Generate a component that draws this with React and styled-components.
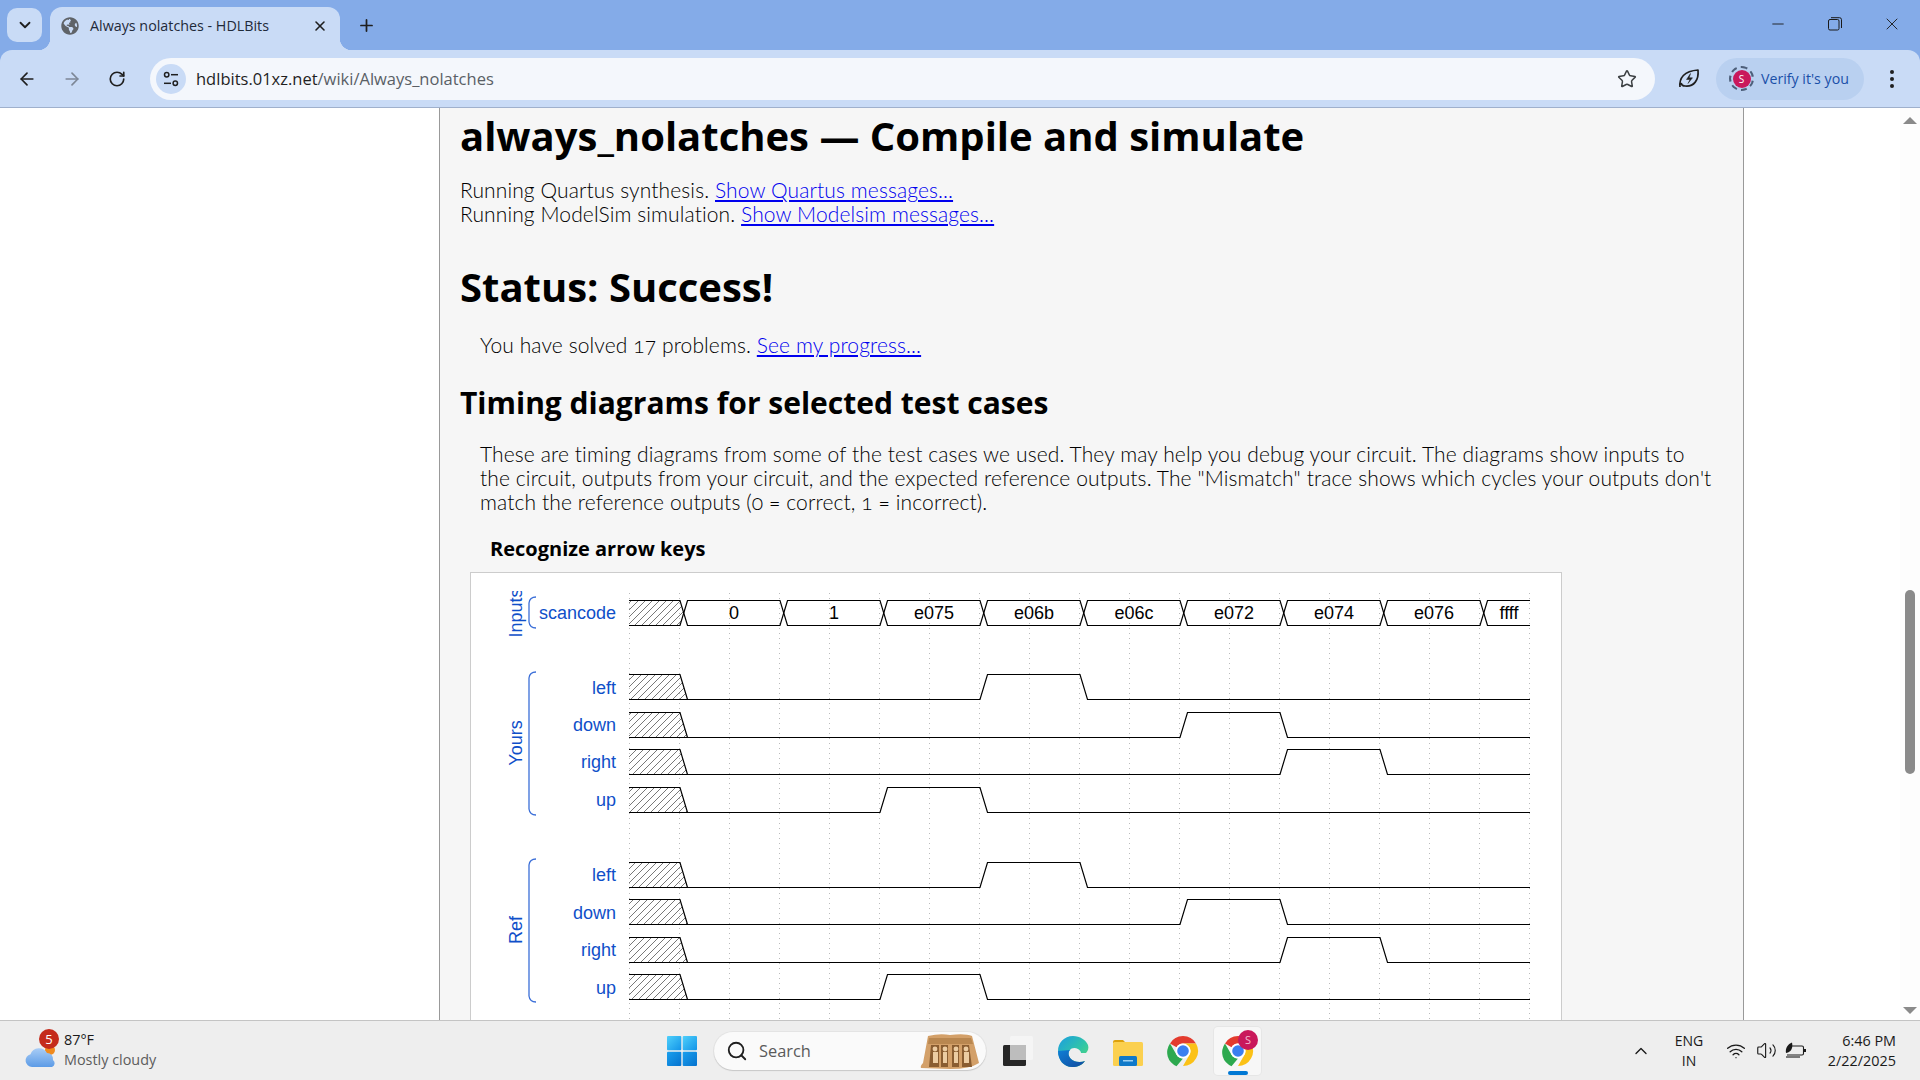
import styled, { createGlobalStyle } from "styled-components";
import { ArrowLeft, ArrowRight, RotateCw, Star, ChevronDown, ChevronUp, Plus, X, Minus, Search, Wifi, Volume2 } from "lucide-react";
import { FaGlobeAmericas } from "react-icons/fa";

const GlobalStyle = createGlobalStyle`
  html, body {
    margin: 0;
    padding: 0;
    height: 100%;
    overflow: hidden;
    background: #fff;
  }
  * { box-sizing: border-box; }
`;

const uiFont = `"Open Sans", "Noto Sans", "Liberation Sans", sans-serif`;

/* ---------- timing diagram ---------- */

const dataValues = ["0", "1", "e075", "e06b", "e06c", "e072", "e074", "e076", "ffff"];

const yoursRows = [
  { name: "left", top: 674.5, labelY: 693.5, rise: 980, fall: 1080 },
  { name: "down", top: 712.5, labelY: 730.5, rise: 1180, fall: 1280 },
  { name: "right", top: 749.5, labelY: 767.5, rise: 1280, fall: 1380 },
  { name: "up", top: 787.5, labelY: 805.5, rise: 880, fall: 980 },
];

const refRows = [
  { name: "left", top: 862.5, labelY: 880.5, rise: 980, fall: 1080 },
  { name: "down", top: 899.5, labelY: 918.5, rise: 1180, fall: 1280 },
  { name: "right", top: 937.5, labelY: 955.5, rise: 1280, fall: 1380 },
  { name: "up", top: 974.5, labelY: 993.5, rise: 880, fall: 980 },
];

const WAVE_H = 25;
const WAVE_START = 629;
const WAVE_END = 1530;
const gridX = Array.from({ length: 19 }, (_, i) => WAVE_START + i * 50);

const Bracket = ({ y0, y1 }) => (
  <path
    d={`M536,${y0} c-4,0 -6.5,2 -7,6 L529,${y1 - 6} c0.5,4 3,6 7,6`}
    fill="none"
    stroke="#3b6fd8"
    strokeWidth="1.3"
  />
);

const GroupLabel = ({ y, children }) => (
  <text x="522" y={y} transform={`rotate(-90 522 ${y})`} textAnchor="middle" fontSize="18" fill="#0f4fc9">
    {children}
  </text>
);

const BitRow = ({ row }) => {
  const { name, top, labelY, rise, fall } = row;
  const bot = top + WAVE_H;
  return (
    <g>
      <text x="616" y={labelY} textAnchor="end" fontSize="18" fill="#0f4fc9">{name}</text>
      <path
        d={`M${WAVE_START},${top} L680,${top} L687.5,${bot} L${WAVE_START},${bot} Z`}
        fill="url(#hatch)"
        stroke="none"
      />
      <path d={`M${WAVE_START},${top} L680,${top} L687.5,${bot}`} fill="none" stroke="#000" strokeWidth="1.2" />
      <path
        d={`M${WAVE_START},${bot} L${rise},${bot} L${rise + 7.5},${top} L${fall},${top} L${fall + 7.5},${bot} L${WAVE_END},${bot}`}
        fill="none"
        stroke="#000"
        strokeWidth="1.2"
      />
    </g>
  );
};

const TimingDiagram = () => {
  const top = 600.5;
  const bot = top + WAVE_H;
  const mid = top + WAVE_H / 2;
  return (
    <DiagramSvg viewBox="471 573 1090 460" width="1090" height="460">
      <defs>
        <pattern id="hatch" patternUnits="userSpaceOnUse" width="7" height="7">
          <path d="M-1,1 L1,-1 M0,7 L7,0 M6,8 L8,6" stroke="#555" strokeWidth="0.8" />
        </pattern>
        <clipPath id="inputsClip">
          <rect x="500" y="591" width="40" height="60" />
        </clipPath>
      </defs>

      {gridX.map((x) => (
        <line key={x} x1={x + 0.5} y1="593" x2={x + 0.5} y2="1033" stroke="#bbb" strokeDasharray="1 4" />
      ))}

      <g clipPath="url(#inputsClip)">
        <GroupLabel y={613}>Inputs</GroupLabel>
      </g>
      <GroupLabel y={743}>Yours</GroupLabel>
      <GroupLabel y={930}>Ref</GroupLabel>
      <Bracket y0={597} y1={628} />
      <Bracket y0={672} y1={815} />
      <Bracket y0={859} y1={1002} />

      <text x="616" y="619" textAnchor="end" fontSize="18" fill="#0f4fc9">scancode</text>
      <path
        d={`M${WAVE_START},${top} L680,${top} L683.75,${mid} L680,${bot} L${WAVE_START},${bot} Z`}
        fill="url(#hatch)"
      />
      <path d={`M${WAVE_START},${top} L680,${top} L683.75,${mid} L680,${bot} L${WAVE_START},${bot}`} fill="none" stroke="#000" strokeWidth="1.2" />
      {dataValues.map((v, i) => {
        const s = 680 + i * 100;
        const last = i === dataValues.length - 1;
        const d = last
          ? `M${WAVE_END},${top} L${s + 7.5},${top} L${s + 3.75},${mid} L${s + 7.5},${bot} L${WAVE_END},${bot}`
          : `M${s + 3.75},${mid} L${s + 7.5},${top} L${s + 100},${top} L${s + 103.75},${mid} L${s + 100},${bot} L${s + 7.5},${bot} Z`;
        return (
          <g key={v}>
            <path d={d} fill="none" stroke="#000" strokeWidth="1.2" />
            <text x={last ? 1509 : s + 54} y="619" textAnchor="middle" fontSize="18" fill="#000">{v}</text>
          </g>
        );
      })}

      {yoursRows.map((r) => <BitRow key={r.name} row={r} />)}
      {refRows.map((r) => <BitRow key={r.name} row={r} />)}
    </DiagramSvg>
  );
};

/* ---------- logos ---------- */

const ChromeLogo = ({ size = 32 }) => (
  <svg width={size} height={size} viewBox="0 0 32 32">
    <path d="M16 1a15 15 0 0 1 13 7.5H16a7.5 7.5 0 0 0-6.5 3.75L3 8.5A15 15 0 0 1 16 1z" fill="#e33b2e" />
    <path d="M3 8.5l6.5 11.25A7.5 7.5 0 0 0 16 23.5l-6.5 7.7A15 15 0 0 1 3 8.5z" fill="#2da94f" />
    <path d="M29 8.5A15 15 0 0 1 16 31l6.5-11.25A7.5 7.5 0 0 0 22.5 12.25L16 8.5z" fill="#fbc116" />
    <circle cx="16" cy="16" r="7.5" fill="#fff" />
    <circle cx="16" cy="16" r="5.8" fill="#3b7ff0" />
  </svg>
);

const EdgeLogo = () => (
  <svg width="32" height="36" viewBox="0 0 32 36">
    <defs>
      <linearGradient id="edgeTop" x1="0" y1="0" x2="1" y2="1">
        <stop offset="0" stopColor="#1b9de2" />
        <stop offset="0.55" stopColor="#30c5a8" />
        <stop offset="1" stopColor="#5fdc6c" />
      </linearGradient>
      <linearGradient id="edgeLow" x1="0" y1="0" x2="1" y2="1">
        <stop offset="0" stopColor="#0f7fd6" />
        <stop offset="1" stopColor="#114a9e" />
      </linearGradient>
    </defs>
    <path d="M16 3C7 3 1 10 1 18c0 9 6 16 14 16 6 0 10-2 13-6-5 2-11 1-14-2-3-3-3-7-1-9 1-2 5-3 8-1 2 1 3 3 3 4h5c2-2 3-5 2-8C29 7 23 3 16 3z" fill="url(#edgeTop)" />
    <path d="M1 18c0 9 6 16 14 16 6 0 10-2 13-6-5 2-11 1-14-2-3-3-3-7-1-9-4 0-8 1-12 1z" fill="url(#edgeLow)" />
  </svg>
);

const FolderLogo = () => (
  <svg width="30" height="30" viewBox="0 0 30 30">
    <path d="M0 6a2 2 0 0 1 2-2h8l3 3h-13z" fill="#dda10c" />
    <rect x="0" y="6" width="30" height="24" rx="1.5" fill="#fbd04f" />
    <rect x="6" y="20" width="18" height="10" rx="1.5" fill="#0f79c9" />
    <rect x="10" y="24" width="10" height="1.5" fill="#9bd0f2" />
  </svg>
);

const WindowsLogo = () => (
  <svg width="30" height="30" viewBox="0 0 30 30">
    <defs>
      <linearGradient id="winA" x1="0" y1="0" x2="1" y2="1">
        <stop offset="0" stopColor="#4fd0fb" />
        <stop offset="1" stopColor="#1294e8" />
      </linearGradient>
      <linearGradient id="winB" x1="0" y1="0" x2="1" y2="1">
        <stop offset="0" stopColor="#1aa0ee" />
        <stop offset="1" stopColor="#0572ce" />
      </linearGradient>
    </defs>
    <rect x="0" y="0" width="14.3" height="14.3" rx="1" fill="url(#winA)" />
    <rect x="15.7" y="0" width="14.3" height="14.3" rx="1" fill="url(#winA)" />
    <rect x="0" y="15.7" width="14.3" height="14.3" rx="1" fill="url(#winB)" />
    <rect x="15.7" y="15.7" width="14.3" height="14.3" rx="1" fill="url(#winB)" />
  </svg>
);

const TaskViewLogo = () => (
  <svg width="30" height="30" viewBox="0 0 30 30">
    <rect x="0" y="9" width="23" height="21" rx="1.5" fill="#262626" />
    <rect x="7" y="0" width="23" height="24" rx="1.5" fill="#f6f6f6" fillOpacity="0.85" />
    <rect x="7" y="9" width="16" height="15" fill="#bdbdbd" />
  </svg>
);

const TempleArt = () => (
  <svg width="60" height="36" viewBox="0 0 60 36">
    <path d="M8 3 Q20 0 30 2 Q45 0 52 3 L59 30 Q50 36 30 36 L1 35 Q0 33 3 30 Z" fill="#d3a069" />
    <path d="M9 5 L51 5 L53 11 L8 11 Z" fill="#b98750" />
    <g fill="#8a5d31">
      <path d="M11 12h8v22h-10z" />
      <path d="M21 12h7v22h-7z" />
      <path d="M32 12h7v22h-7z" />
      <path d="M42 12h7l3 22h-10z" />
    </g>
    <g fill="#eccca2">
      <circle cx="15" cy="16" r="2.4" />
      <circle cx="25" cy="16" r="2.4" />
      <circle cx="36" cy="16" r="2.4" />
      <circle cx="46" cy="16" r="2.4" />
      <rect x="13" y="19" width="5" height="11" />
      <rect x="23" y="19" width="4" height="11" />
      <rect x="34" y="19" width="4" height="11" />
      <rect x="44" y="19" width="5" height="11" />
    </g>
  </svg>
);

const CloudLogo = () => (
  <svg width="34" height="26" viewBox="0 0 34 26">
    <defs>
      <linearGradient id="cloudFill" x1="0" y1="0" x2="0" y2="1">
        <stop offset="0" stopColor="#a9cdf6" />
        <stop offset="1" stopColor="#5c9be6" />
      </linearGradient>
    </defs>
    <circle cx="26" cy="7" r="5" fill="#f08a1d" />
    <path d="M8 24a6.5 6.5 0 0 1-1.5-12.8A9 9 0 0 1 23 10a6 6 0 0 1 6 7 4 4 0 0 1-1 7z" fill="url(#cloudFill)" />
  </svg>
);

const TuneIcon = () => (
  <svg width="16" height="16" viewBox="0 0 16 16" fill="none" stroke="#1f1f1f" strokeWidth="1.5">
    <circle cx="3.7" cy="3.7" r="2.2" />
    <path d="M8 3.7h7" />
    <circle cx="12.3" cy="12.3" r="2.2" />
    <path d="M1 12.3h7" />
  </svg>
);

const LeafIcon = () => (
  <svg width="22" height="22" viewBox="0 0 22 22" fill="none" stroke="#1f1f1f" strokeWidth="1.7">
    <path d="M2 19 C1 10 6 3 20 2 C21 12 16 19 7 18 C5 18 3.5 17 3 15" strokeLinejoin="round" />
    <path d="M12.5 5.5 L8.5 11.5 H12 L10 15.5 L14.5 9.8 H11.2 Z" fill="#1f1f1f" strokeWidth="0.5" />
  </svg>
);

const RestoreIcon = () => (
  <svg width="14" height="14" viewBox="0 0 14 14" fill="none" stroke="#1a1a1a" strokeWidth="1">
    <rect x="0.5" y="2.5" width="10.5" height="10.5" rx="1.5" />
    <path d="M3 0.7h8.5a2 2 0 0 1 2 2V11" />
  </svg>
);

const BatteryIcon = () => (
  <svg width="22" height="18" viewBox="0 0 22 18" fill="none" stroke="#1a1a1a" strokeWidth="1.1">
    <path d="M6 4h11a1.5 1.5 0 0 1 1.5 1.5v6A1.5 1.5 0 0 1 17 13H2" />
    <rect x="19" y="7" width="2" height="3" fill="#1a1a1a" stroke="none" />
    <path d="M1 11 C0 6 3 2 7 0.5 C8 5 7 10 1 11Z" fill="#1a1a1a" stroke="none" />
    <path d="M1 15h14" />
  </svg>
);

/* ---------- app ---------- */

const App = () => (
  <Screen>
    <GlobalStyle />

    <Frame>
      <TabStrip>
        <TabMenu><ChevronDown size={18} strokeWidth={2.4} color="#1f1f1f" /></TabMenu>
        <Tab>
          <FaGlobeAmericas size={18} color="#5f6368" />
          <TabTitle>Always nolatches - HDLBits</TabTitle>
          <X size={16} strokeWidth={2.4} color="#1f1f1f" />
        </Tab>
        <NewTab><Plus size={19} strokeWidth={2.2} color="#1f1f1f" /></NewTab>
        <WindowButtons>
          <WindowButton><Minus size={18} strokeWidth={1.2} color="#1a1a1a" /></WindowButton>
          <WindowButton><RestoreIcon /></WindowButton>
          <WindowButton><X size={20} strokeWidth={1.1} color="#1a1a1a" /></WindowButton>
        </WindowButtons>
      </TabStrip>

      <Toolbar>
        <NavButton><ArrowLeft size={20} strokeWidth={2} color="#1f1f1f" /></NavButton>
        <NavButton><ArrowRight size={20} strokeWidth={2} color="#7d8796" /></NavButton>
        <NavButton><RotateCw size={18} strokeWidth={2.2} color="#1f1f1f" /></NavButton>
        <Omnibox>
          <SiteChip><TuneIcon /></SiteChip>
          <UrlText>hdlbits.01xz.net<UrlPath>/wiki/Always_nolatches</UrlPath></UrlText>
          <Star size={20} strokeWidth={1.8} color="#3c4043" />
        </Omnibox>
        <LeafSlot><LeafIcon /></LeafSlot>
        <VerifyPill>
          <AvatarRing><Avatar>S</Avatar></AvatarRing>
          Verify it's you
        </VerifyPill>
        <MenuDots><i /><i /><i /></MenuDots>
      </Toolbar>
    </Frame>

    <Viewport>
      <Gutter />
      <Article>
        <Title>always_nolatches — Compile and simulate</Title>
        <LogBlock>
          Running Quartus synthesis. <a href="#q">Show Quartus messages...</a>
          <br />
          Running ModelSim simulation. <a href="#m">Show Modelsim messages...</a>
        </LogBlock>
        <StatusTitle>Status: Success!</StatusTitle>
        <Solved>You have solved 17 problems. <a href="#p">See my progress...</a></Solved>
        <SubTitle>Timing diagrams for selected test cases</SubTitle>
        <Explain>
          These are timing diagrams from some of the test cases we used. They may help you debug your circuit. The diagrams show inputs to
          <br />
          the circuit, outputs from your circuit, and the expected reference outputs. The "Mismatch" trace shows which cycles your outputs don't
          <br />
          match the reference outputs (0 = correct, 1 = incorrect).
        </Explain>
        <CaseTitle>Recognize arrow keys</CaseTitle>
        <DiagramCard><TimingDiagram /></DiagramCard>
      </Article>
      <RightGutter>
        <Scrollbar>
          <ArrowUp />
          <Thumb />
          <ArrowDown />
        </Scrollbar>
      </RightGutter>
    </Viewport>

    <Taskbar>
      <Weather>
        <WeatherIcon>
          <CloudLogo />
          <Badge>5</Badge>
        </WeatherIcon>
        <WeatherText>
          <span>87°F</span>
          <WeatherNote>Mostly cloudy</WeatherNote>
        </WeatherText>
      </Weather>
      <TaskCluster>
        <StartSlot><WindowsLogo /></StartSlot>
        <SearchBox>
          <Search size={22} strokeWidth={2} color="#1f1f1f" />
          <SearchLabel>Search</SearchLabel>
          <TempleArt />
        </SearchBox>
        <TaskSlot><TaskViewLogo /></TaskSlot>
        <TaskSlot><EdgeLogo /></TaskSlot>
        <TaskSlot><FolderLogo /></TaskSlot>
        <TaskSlot><ChromeLogo /></TaskSlot>
        <TaskSlot $active>
          <ChromeLogo />
          <ProfileDot>S</ProfileDot>
          <ActiveBar />
        </TaskSlot>
      </TaskCluster>
      <Tray>
        <TraySlot $w={24}><ChevronUp size={20} strokeWidth={1.6} color="#1a1a1a" /></TraySlot>
        <Lang>ENG<br />IN</Lang>
        <TraySlot $w={30}><Wifi size={20} strokeWidth={1.6} color="#1a1a1a" /></TraySlot>
        <TraySlot $w={30}><Volume2 size={21} strokeWidth={1.3} color="#1a1a1a" /></TraySlot>
        <TraySlot $w={30}><BatteryIcon /></TraySlot>
        <Clock>6:46 PM<br />2/22/2025</Clock>
      </Tray>
    </Taskbar>
  </Screen>
);

export default App;

const Screen = styled.div`
  width: 1920px;
  height: 1080px;
  display: flex;
  flex-direction: column;
  overflow: hidden;
  font-family: ${uiFont};
`;

const Frame = styled.header`
  flex: none;
  background: #84abe8;
`;

const TabStrip = styled.div`
  height: 50px;
  display: flex;
  align-items: flex-end;
  padding-left: 7px;
`;

const TabMenu = styled.div`
  width: 35px;
  height: 34px;
  margin-bottom: 8px;
  border-radius: 10px;
  background: #c9dbf6;
  display: flex;
  align-items: center;
  justify-content: center;
`;

const Tab = styled.div`
  position: relative;
  width: 290px;
  height: 43px;
  margin-left: 8px;
  padding: 0 12px 6px 11px;
  background: #c9dbf6;
  border-radius: 12px 12px 0 0;
  display: flex;
  align-items: center;
  gap: 11px;

  &::before,
  &::after {
    content: "";
    position: absolute;
    bottom: 0;
    width: 12px;
    height: 12px;
  }
  &::before {
    left: -12px;
    background: radial-gradient(circle at 0 0, transparent 12px, #c9dbf6 12.5px);
  }
  &::after {
    right: -12px;
    background: radial-gradient(circle at 100% 0, transparent 12px, #c9dbf6 12.5px);
  }
`;

const TabTitle = styled.span`
  flex: 1;
  font-size: 14.3px;
  color: #1f2a3a;
  white-space: nowrap;
`;

const NewTab = styled.div`
  width: 34px;
  height: 34px;
  margin: 0 0 8px 9px;
  display: flex;
  align-items: center;
  justify-content: center;
`;

const WindowButtons = styled.div`
  margin-left: auto;
  height: 50px;
  display: flex;
`;

const WindowButton = styled.div`
  width: 57px;
  height: 50px;
  padding-bottom: 2px;
  display: flex;
  align-items: center;
  justify-content: center;
`;

const Toolbar = styled.div`
  height: 58px;
  padding: 0 8px 0 9px;
  background: #c9dbf6;
  border-radius: 12px 12px 0 0;
  border-bottom: 1px solid #9fb0cc;
  display: flex;
  align-items: center;
`;

const NavButton = styled.div`
  width: 36px;
  height: 36px;
  margin-right: 9px;
  display: flex;
  align-items: center;
  justify-content: center;
`;

const Omnibox = styled.div`
  width: 1505px;
  height: 42px;
  margin-left: 6px;
  padding: 0 18px 0 6px;
  border-radius: 21px;
  background: #f4f7fc;
  display: flex;
  align-items: center;
`;

const SiteChip = styled.div`
  width: 30px;
  height: 30px;
  border-radius: 50%;
  background: #c9dbf6;
  display: flex;
  align-items: center;
  justify-content: center;
`;

const UrlText = styled.div`
  flex: 1;
  margin-left: 10px;
  font-size: 16.5px;
  color: #1f1f1f;
`;

const UrlPath = styled.span`
  color: #5a5f66;
`;

const LeafSlot = styled.div`
  width: 36px;
  height: 36px;
  margin: 0 9px 0 16px;
  display: flex;
  align-items: center;
  justify-content: center;
`;

const VerifyPill = styled.div`
  width: 148px;
  height: 42px;
  padding-left: 13px;
  border-radius: 21px;
  background: #b9d0f0;
  color: #1a4fa8;
  font-size: 14.2px;
  display: flex;
  align-items: center;
  gap: 7px;
  white-space: nowrap;
`;

const AvatarRing = styled.div`
  width: 25px;
  height: 25px;
  border-radius: 50%;
  border: 2px dashed #4d5f7a;
  display: flex;
  align-items: center;
  justify-content: center;
`;

const Avatar = styled.div`
  width: 18px;
  height: 18px;
  border-radius: 50%;
  background: #c9185b;
  color: #fff;
  font-size: 10px;
  display: flex;
  align-items: center;
  justify-content: center;
`;

const MenuDots = styled.div`
  margin-left: 26px;
  display: flex;
  flex-direction: column;
  gap: 3px;

  i {
    display: block;
    width: 4px;
    height: 4px;
    border-radius: 50%;
    background: #1f1f1f;
  }
`;

const Viewport = styled.main`
  flex: 1;
  min-height: 0;
  display: flex;
  overflow: hidden;
  background: #fff;
`;

const Gutter = styled.div`
  width: 439px;
  flex: none;
`;

const Article = styled.article`
  width: 1305px;
  flex: none;
  padding: 2px 0 0 20px;
  background: #f6f6f6;
  border-left: 1px solid #999;
  border-right: 1px solid #999;
  color: #000;
  font-family: Lato, "Liberation Sans", sans-serif;
  font-size: 21px;
  font-weight: 300;
  letter-spacing: 0.11px;
  line-height: 24px;
  font-variant-numeric: oldstyle-nums;

  a {
    color: #0000ee;
  }
`;

const Title = styled.h1`
  margin: 0;
  font-family: ${uiFont};
  font-size: 40px;
  line-height: 52px;
  font-weight: 700;
  letter-spacing: 0;
`;

const LogBlock = styled.p`
  margin: 16px 0 0;
`;

const StatusTitle = styled(Title)`
  margin-top: 35px;
`;

const Solved = styled.p`
  margin: 20px 0 0 20px;
`;

const SubTitle = styled.h2`
  margin: 28px 0 0;
  font-family: ${uiFont};
  font-size: 30px;
  line-height: 36px;
  font-weight: 700;
  letter-spacing: 0;
`;

const Explain = styled.p`
  margin: 21px 0 0 20px;
`;

const CaseTitle = styled.h3`
  margin: 21px 0 0 30px;
  font-family: ${uiFont};
  font-size: 20px;
  line-height: 28px;
  font-weight: 700;
  letter-spacing: 0;
`;

const DiagramCard = styled.div`
  width: 1092px;
  margin: 9px 0 0 10px;
  background: #fff;
  border: 1px solid #ccc;
`;

const DiagramSvg = styled.svg`
  display: block;
  font-family: "Liberation Sans", Arial, sans-serif;
  font-weight: 400;
  letter-spacing: 0;
`;

const RightGutter = styled.div`
  flex: 1;
  display: flex;
  justify-content: flex-end;
`;

const Scrollbar = styled.div`
  width: 20px;
  padding-top: 9px;
  background: #fdfdfd;
  display: flex;
  flex-direction: column;
  align-items: center;
`;

const ArrowUp = styled.div`
  width: 0;
  height: 0;
  border-left: 7px solid transparent;
  border-right: 7px solid transparent;
  border-bottom: 7px solid #8a8a8a;
`;

const Thumb = styled.div`
  width: 10px;
  height: 184px;
  margin-top: 466px;
  border-radius: 5px;
  background: #8a8a8a;
`;

const ArrowDown = styled.div`
  width: 0;
  height: 0;
  margin-top: 233px;
  border-left: 7px solid transparent;
  border-right: 7px solid transparent;
  border-top: 7px solid #8a8a8a;
`;

const Taskbar = styled.footer`
  flex: none;
  height: 60px;
  background: #eeeeee;
  border-top: 1px solid #c4c4c4;
  display: flex;
  align-items: center;
`;

const Weather = styled.div`
  width: 657px;
  flex: none;
  padding-left: 24px;
  display: flex;
  align-items: center;
`;

const WeatherIcon = styled.div`
  position: relative;
  width: 40px;
  height: 40px;
  padding-top: 12px;
`;

const Badge = styled.div`
  position: absolute;
  top: -2px;
  left: 15px;
  width: 20px;
  height: 20px;
  border-radius: 50%;
  background: #c42b1c;
  color: #fff;
  font-size: 13px;
  line-height: 20px;
  text-align: center;
`;

const WeatherText = styled.div`
  display: flex;
  flex-direction: column;
  margin-bottom: 2px;
  font-size: 14.4px;
  line-height: 20px;
  color: #1a1a1a;
`;

const WeatherNote = styled.span`
  color: #5c5c5c;
`;

const TaskCluster = styled.div`
  display: flex;
  align-items: center;
  gap: 8px;
`;

const TaskSlot = styled.div`
  position: relative;
  width: 47px;
  height: 48px;
  border-radius: 4px;
  display: flex;
  align-items: center;
  justify-content: center;
  background: ${(p) => (p.$active ? "#f7f7f7" : "transparent")};
  box-shadow: ${(p) => (p.$active ? "0 0 0 1px #e6e6e6" : "none")};
`;

const StartSlot = styled(TaskSlot)`
  margin: 0 1px 0 1px;
`;

const ProfileDot = styled.div`
  position: absolute;
  top: 3px;
  right: 3px;
  width: 20px;
  height: 20px;
  border-radius: 50%;
  background: #c9185b;
  color: #f3b9d0;
  font-size: 11px;
  line-height: 20px;
  text-align: center;
`;

const ActiveBar = styled.div`
  position: absolute;
  bottom: 0;
  left: 14px;
  width: 20px;
  height: 4px;
  border-radius: 2px;
  background: #0078d4;
`;

const SearchBox = styled.div`
  width: 272px;
  height: 38px;
  padding: 0 6px 0 12px;
  border-radius: 19px;
  background: #fafafa;
  box-shadow: 0 1px 1px #c8c8c8, 0 0 0 1px #e4e4e4;
  display: flex;
  align-items: center;
  overflow: hidden;
`;

const SearchLabel = styled.span`
  flex: 1;
  margin-left: 11px;
  font-size: 16.4px;
  color: #5a5a5a;
`;

const Tray = styled.div`
  margin-left: auto;
  width: 291px;
  padding-right: 24px;
  display: flex;
  align-items: center;
`;

const TraySlot = styled.div`
  width: ${(p) => p.$w}px;
  display: flex;
  align-items: center;
  justify-content: center;
`;

const Lang = styled.div`
  width: 48px;
  margin: 0 8px 0 12px;
  font-size: 14px;
  line-height: 20px;
  text-align: center;
  color: #1a1a1a;
`;

const Clock = styled.div`
  flex: 1;
  font-size: 14.4px;
  line-height: 20px;
  text-align: right;
  color: #1a1a1a;
`;
